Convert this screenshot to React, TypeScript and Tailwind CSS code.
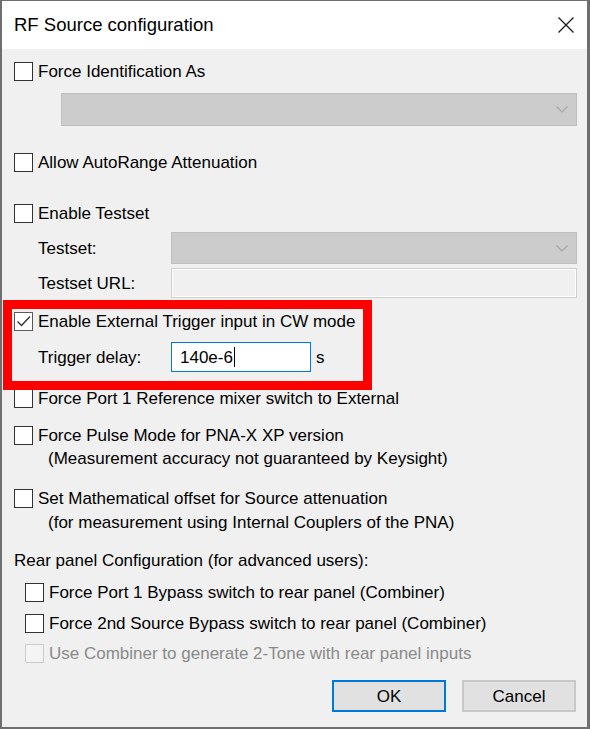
import clsx from "clsx";

const font = "font-['Liberation_Sans',Arial,sans-serif]";

function CheckBox({ checked = false, disabled = false }: { checked?: boolean; disabled?: boolean }) {
  return (
    <span
      className={clsx(
        "flex h-[19px] w-[19px] shrink-0 items-center justify-center border",
        disabled ? "border-[#cccccc] bg-[#f4f4f4]" : checked ? "border-[#5a5a5a] bg-white" : "border-[#333333] bg-white",
      )}
    >
      {checked ? (
        <svg width="17" height="17" viewBox="0 0 17 17" fill="none">
          <path d="M2.5 8.5 L6.5 12.5 L15 3.5" stroke="#333333" strokeWidth="1.4" />
        </svg>
      ) : null}
    </span>
  );
}

function CheckRow({
  label,
  checked,
  disabled,
  className,
}: {
  label: string;
  checked?: boolean;
  disabled?: boolean;
  className?: string;
}) {
  return (
    <div className={clsx("flex h-[20px] items-center gap-[5px]", className)}>
      <CheckBox checked={checked} disabled={disabled} />
      <span className={clsx("whitespace-nowrap", disabled ? "text-[#8a8a8a]" : "text-black")}>{label}</span>
    </div>
  );
}

function Chevron() {
  return (
    <svg width="12" height="7" viewBox="0 0 12 7" fill="none">
      <path d="M0.5 0.5 L6 6 L11.5 0.5" stroke="#a6a6a6" strokeWidth="1.2" />
    </svg>
  );
}

function DisabledSelect({ className }: { className?: string }) {
  return (
    <div
      className={clsx(
        "flex items-center justify-end border border-[#bfbfbf] bg-[#cccccc] pr-[8px]",
        className,
      )}
    >
      <Chevron />
    </div>
  );
}

export default function App() {
  return (
    <div className={clsx("h-[729px] w-[590px] overflow-hidden bg-[#f0f0f0] text-[17px] leading-none", font)}>
      <div className="flex h-[729px] w-[590px] flex-col border-t border-r-[3px] border-b-[2px] border-l-2 border-[#6f6f6f]">
        {/* title bar */}
        <div className="flex h-[48px] shrink-0 items-center justify-between bg-white pl-[12px] pr-[13px]">
          <span className="text-[18.5px] text-black">RF Source configuration</span>
          <svg width="16" height="16" viewBox="0 0 16 16" fill="none">
            <path d="M0.5 0.5 L15.5 15.5 M15.5 0.5 L0.5 15.5" stroke="#1a1a1a" strokeWidth="1.3" />
          </svg>
        </div>

        <div className="relative flex flex-1 flex-col pl-[12px] pr-[10px]">
          <CheckRow label="Force Identification As" className="mt-[12px]" />
          <DisabledSelect className="mt-[12px] ml-[47px] h-[33px]" />

          <CheckRow label="Allow AutoRange Attenuation" className="mt-[26px]" />

          <CheckRow label="Enable Testset" className="mt-[31px]" />
          <div className="mt-[9px] flex h-[32px] items-center">
            <span className="w-[157px] pl-[24px]">Testset:</span>
            <DisabledSelect className="h-[32px] flex-1" />
          </div>
          <div className="mt-[4px] flex h-[30px] items-center">
            <span className="w-[157px] pl-[24px]">Testset URL:</span>
            <div className="h-[30px] flex-1 border border-[#cfcfcf] bg-[#f0f0f0] shadow-[inset_0_0_0_1px_#ffffff]" />
          </div>

          <CheckRow label="Enable External Trigger input in CW mode" checked className="mt-[13px]" />
          <div className="mt-[11px] flex h-[30px] items-center">
            <span className="w-[157px] pl-[24px]">Trigger delay:</span>
            <div className="flex h-[30px] w-[140px] items-center border border-[#0078d7] bg-white pl-[8px]">
              <span>140e-6</span>
              <span className="ml-[1px] h-[20px] w-px bg-black" />
            </div>
            <span className="ml-[5px]">s</span>
          </div>

          <CheckRow label="Force Port 1 Reference mixer switch to External" className="mt-[16px]" />

          <CheckRow label="Force Pulse Mode for PNA-X XP version" className="mt-[17px]" />
          <div className="mt-[3px] flex h-[20px] items-center pl-[34px]">
            (Measurement accuracy not guaranteed by Keysight)
          </div>

          <CheckRow label="Set Mathematical offset for Source attenuation" className="mt-[20px]" />
          <div className="mt-[4px] flex h-[20px] items-center pl-[34px]">
            (for measurement using Internal Couplers of the PNA)
          </div>

          <div className="mt-[18px] flex h-[20px] items-center">Rear panel Configuration (for advanced users):</div>

          <div className="ml-[11px] flex flex-col">
            <CheckRow label="Force Port 1 Bypass switch to rear panel (Combiner)" className="mt-[12px]" />
            <CheckRow label="Force 2nd Source Bypass switch to rear panel (Combiner)" className="mt-[11px]" />
            <CheckRow label="Use Combiner to generate 2-Tone with rear panel inputs" disabled className="mt-[10px]" />
          </div>

          <div className="mt-[17px] flex justify-end gap-[16px] pr-[1px]">
            <button
              type="button"
              className="flex h-[32px] w-[114px] items-center justify-center border-2 border-[#0078d7] bg-[#e1e1e1] text-black"
            >
              OK
            </button>
            <button
              type="button"
              className="flex h-[32px] w-[114px] items-center justify-center border-2 border-[#c8c8c8] bg-[#e1e1e1] text-black"
            >
              Cancel
            </button>
          </div>

          {/* red annotation box drawn over the trigger section */}
          <div className="pointer-events-none absolute top-[251px] left-[1px] h-[90px] w-[369px] border-[9px] border-[#ff0000]" />
        </div>
      </div>
    </div>
  );
}
